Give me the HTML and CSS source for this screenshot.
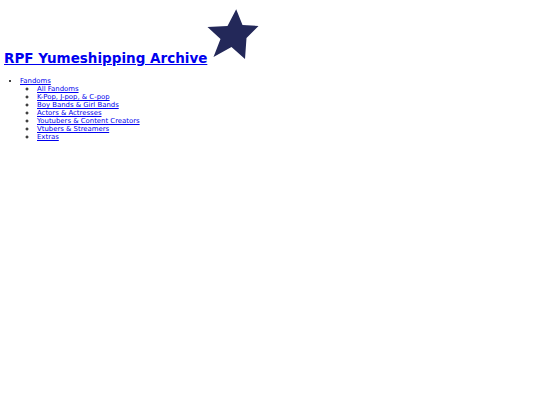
FILE: index.html
```html
<!DOCTYPE html>
<html>
<head>
<meta charset="utf-8">
<link rel="stylesheet" href="styles.css">
</head>
<body>
<h1 class="title"><a href="#">RPF Yumeshipping Archive</a><svg class="star" width="56" height="56" viewBox="0 0 56 56"><polygon points="29.2,2.3 35.5,18 51.5,19 39.5,31 38,52 24.5,40 6.5,50 13.5,32 0.5,20 20.5,19" fill="#232859"/></svg></h1>
<ul class="nav">
<li><a href="#">Fandoms</a>
<ul class="sub">
<li><a href="#">All Fandoms</a></li>
<li><a href="#">K-Pop, J-pop, &amp; C-pop</a></li>
<li><a href="#">Boy Bands &amp; Girl Bands</a></li>
<li><a href="#">Actors &amp; Actresses</a></li>
<li><a href="#">Youtubers &amp; Content Creators</a></li>
<li><a href="#">Vtubers &amp; Streamers</a></li>
<li><a href="#">Extras</a></li>
</ul>
</li>
</ul>
</body>
</html>
```
FILE: styles.css
```css
html, body { background: #fff; }
body {
  margin: 0;
  padding: 7px 4px 0 4px;
  font-family: "DejaVu Sans", Verdana, sans-serif;
}
a { color: #0000ee; }
.title {
  margin: 0;
  font-size: 13.5px;
  font-weight: bold;
  line-height: 16px;
}
.star { vertical-align: baseline; }
.nav {
  margin: 11px 0 0 0;
  padding-left: 16px;
  font-size: 6.9px;
  line-height: 8px;
}
.sub {
  margin: 0;
  padding-left: 17px;
  list-style-type: circle;
}
```
